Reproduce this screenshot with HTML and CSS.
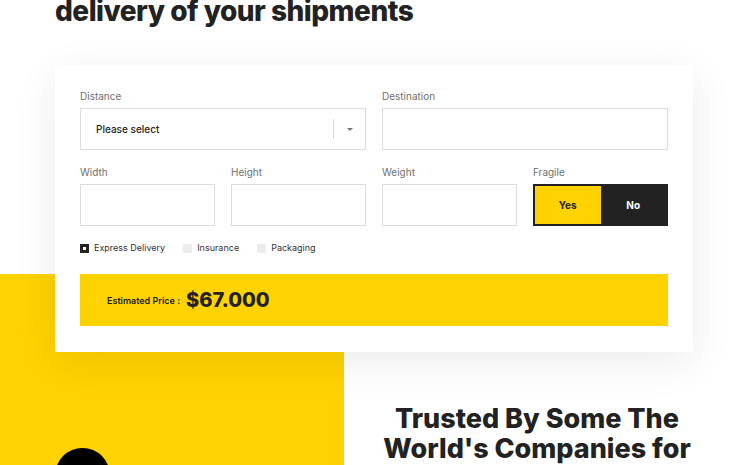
FILE: index.html
```html
<!DOCTYPE html>
<html>
<head>
<link rel="stylesheet" href="styles.css">
</head>
<body>

<h2 class="page_title">delivery of your shipments</h2>

<div class="calc_card">
  <div class="row row_two">
    <div class="field">
      <div class="label">Distance</div>
      <div class="select_box">
        <span class="select_text">Please select</span>
        <span class="select_arrow"></span>
      </div>
    </div>
    <div class="field">
      <div class="label">Destination</div>
      <div class="input_box"></div>
    </div>
  </div>

  <div class="row row_four">
    <div class="field">
      <div class="label">Width</div>
      <div class="input_box"></div>
    </div>
    <div class="field">
      <div class="label">Height</div>
      <div class="input_box"></div>
    </div>
    <div class="field">
      <div class="label">Weight</div>
      <div class="input_box"></div>
    </div>
    <div class="field">
      <div class="label">Fragile</div>
      <div class="toggle">
        <div class="toggle_opt toggle_yes">Yes</div>
        <div class="toggle_opt toggle_no">No</div>
      </div>
    </div>
  </div>

  <div class="checks">
    <div class="check"><span class="box box_on"></span>Express Delivery</div>
    <div class="check"><span class="box"></span>Insurance</div>
    <div class="check"><span class="box"></span>Packaging</div>
  </div>

  <div class="price_bar">
    <span class="price_label">Estimated Price :</span>
    <span class="price_value">$67.000</span>
  </div>
</div>

<div class="about">
  <div class="about_side">
    <div class="circle"></div>
  </div>
  <div class="about_text">
    <h2 class="about_title">Trusted By Some The<br>World's Companies for</h2>
  </div>
</div>

</body>
</html>
```

FILE: styles.css
```css
body {
  margin: 0;
  font-family: "Inter", "Noto Sans", sans-serif;
  color: #222;
  background: #fff;
  overflow: hidden;
}

.page_title {
  margin: -6px 0 0 55px;
  font-size: 28px;
  line-height: 34px;
  font-weight: 800;
  letter-spacing: -0.5px;
}

/* calculator card */
.calc_card {
  position: relative;
  z-index: 1;
  width: 588px;
  margin: 37px 0 0 55px;
  padding: 24px 25px 26px;
  background: #fff;
  box-shadow: 0 10px 40px rgba(0, 0, 0, 0.08);
}

.row {
  display: grid;
  gap: 16px;
}

.row_two {
  grid-template-columns: 1fr 1fr;
}

.row_four {
  grid-template-columns: repeat(4, 1fr);
  margin-top: 15px;
}

.label {
  font-size: 10px;
  line-height: 14px;
  color: #707070;
  margin-bottom: 5px;
}

.input_box {
  height: 42px;
  box-sizing: border-box;
  border: 1px solid #dcdcdc;
}

.select_box {
  display: flex;
  align-items: center;
  height: 42px;
  box-sizing: border-box;
  border: 1px solid #dcdcdc;
  padding-left: 15px;
  font-size: 10px;
  font-weight: 500;
}

.select_text {
  flex: 1;
}

.select_arrow {
  width: 31px;
  height: 20px;
  border-left: 1px solid #dcdcdc;
  display: flex;
  align-items: center;
  justify-content: center;
}

.select_arrow::after {
  content: "";
  border-left: 3px solid transparent;
  border-right: 3px solid transparent;
  border-top: 3px solid #777;
}

.toggle {
  display: flex;
  height: 42px;
  box-sizing: border-box;
  border: 2px solid #222;
}

.toggle_opt {
  flex: 1;
  display: flex;
  align-items: center;
  justify-content: center;
  font-size: 10px;
  font-weight: 700;
}

.toggle_yes {
  background: #ffd200;
}

.toggle_no {
  background: #222;
  color: #fff;
}

.checks {
  display: flex;
  gap: 18px;
  margin-top: 15px;
  font-size: 9px;
  line-height: 14px;
  color: #333;
}

.check {
  display: flex;
  align-items: center;
  gap: 5px;
}

.box {
  width: 9px;
  height: 9px;
  box-sizing: border-box;
  background: #ececec;
}

.box_on {
  background: #fff;
  border: 3px solid #222;
}

.price_bar {
  display: flex;
  align-items: center;
  gap: 6px;
  height: 52px;
  margin-top: 19px;
  padding-left: 27px;
  background: #ffd200;
}

.price_label {
  font-size: 9px;
  font-weight: 600;
}

.price_value {
  font-size: 20px;
  font-weight: 800;
}

/* section under the card */
.about {
  display: flex;
  margin-top: -78px;
}

.about_side {
  width: 344px;
  height: 300px;
  box-sizing: border-box;
  padding: 174px 0 0 55px;
  background: #ffd200;
}

.circle {
  width: 55px;
  height: 55px;
  border-radius: 50%;
  background: #000;
}

.about_text {
  flex: 1;
  padding: 130px 18px 0 0;
  text-align: center;
}

.about_title {
  margin: 0;
  font-size: 27px;
  line-height: 30px;
  font-weight: 800;
}
```
